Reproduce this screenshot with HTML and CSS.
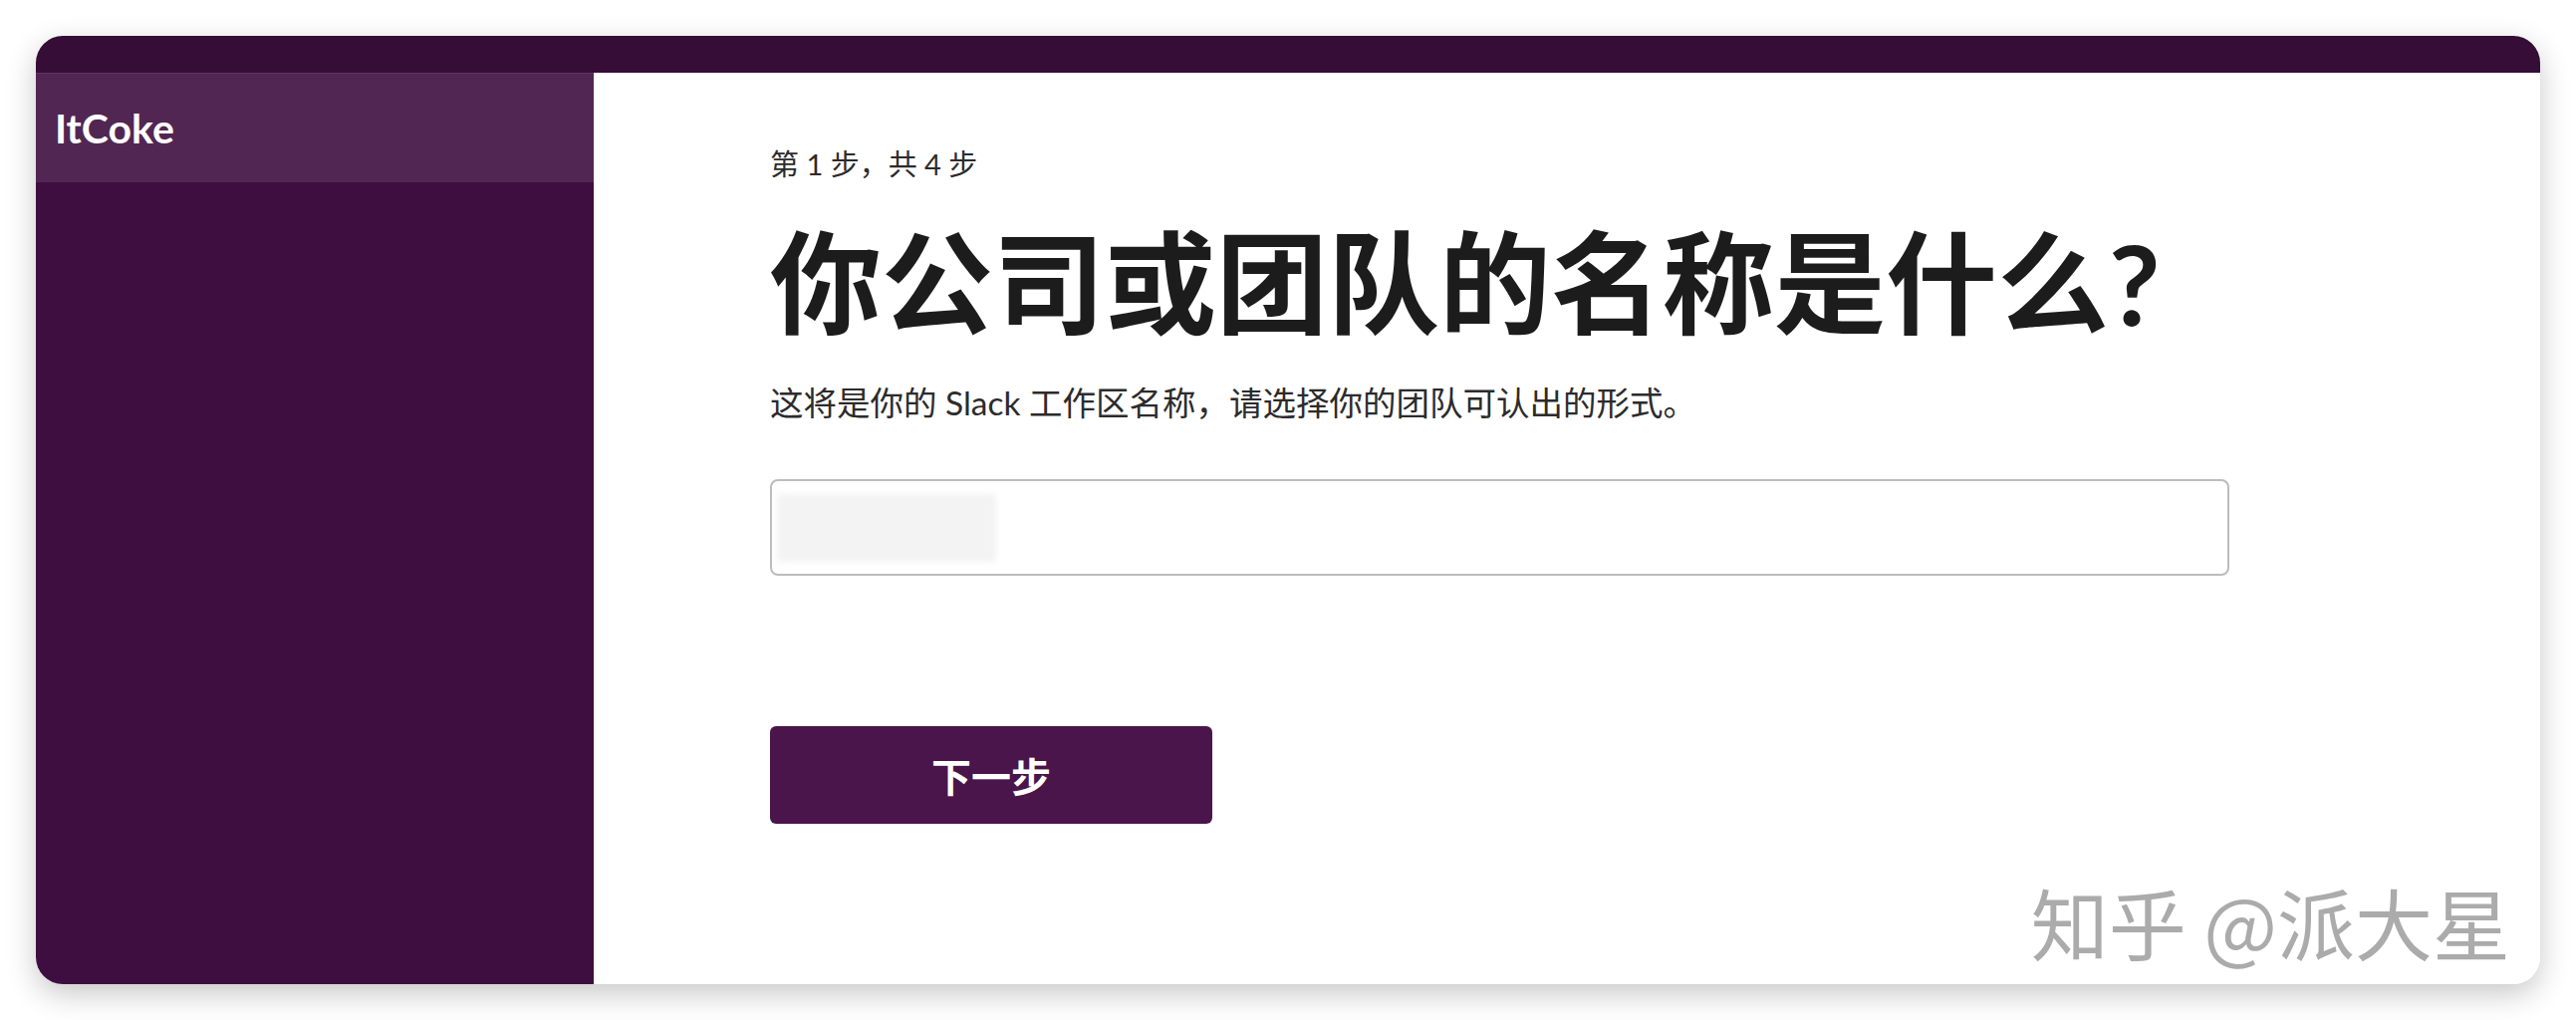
FILE: index.html
```html
<!DOCTYPE html>
<html lang="zh-CN">
	<head>
		<meta charset="UTF-8" />
		<meta name="viewport" content="width=device-width, initial-scale=1.0" />
		<title>创建工作区 | Slack</title>
		<link rel="stylesheet" href="styles.css">
	</head>
	<body>
		<div class="window">
			<div class="topbar"></div>
			<div class="frame">
				<aside class="sidebar">
					<div class="team-name">ItCoke</div>
				</aside>
				<main class="setup">
					<p class="step">第 1 步，共 4 步</p>
					<h1>你公司或团队的名称是什么?</h1>
					<p class="hint">这将是你的 Slack 工作区名称，请选择你的团队可认出的形式。</p>
					<div class="field">
						<span class="redacted"></span>
					</div>
					<button class="next">下一步</button>
				</main>
			</div>
			<div class="watermark">知乎 @派大星</div>
		</div>
	</body>
</html>
```

FILE: styles.css
```css
body {
	margin: 0;
	padding: 36px;
	background: #fff;
	font-family: Lato, "Noto Sans CJK SC", sans-serif;
	color: #1d1c1d;
}
.window {
	position: relative;
	display: flex;
	flex-direction: column;
	height: 952px;
	border-radius: 27px;
	overflow: hidden;
	box-shadow: 0 10px 30px rgba(0, 0, 0, 0.22);
}
.topbar {
	height: 37px;
	background: #350d36;
}
.frame {
	flex: 1;
	display: flex;
}
.sidebar {
	width: 560px;
	background: #3f0e40;
}
.team-name {
	height: 109px;
	border-top: 1px solid #5d365e;
	background: #522653;
	display: flex;
	align-items: center;
	padding-left: 19px;
	color: #fff;
	font-size: 41px;
	font-weight: 700;
}
.setup {
	flex: 1;
	background: #fff;
	padding: 74px 0 0 177px;
}
.step {
	margin: 0;
	font-size: 29px;
	line-height: 36px;
	color: #2c2b2c;
}
h1 {
	margin: 35px 0 0;
	font-size: 112px;
	line-height: 132px;
	font-weight: 700;
	color: #1d1c1d;
}
.hint {
	margin: 32px 0 0;
	font-size: 33.5px;
	line-height: 44px;
	color: #2c2b2c;
}
.field {
	box-sizing: border-box;
	margin-top: 55px;
	width: 1465px;
	height: 97px;
	border: 2px solid #bcbcbc;
	border-radius: 8px;
	display: flex;
	align-items: center;
	padding-left: 5px;
}
.redacted {
	width: 220px;
	height: 68px;
	background: #f3f3f3;
	filter: blur(3px);
}
.next {
	display: block;
	margin-top: 151px;
	width: 444px;
	height: 98px;
	border: none;
	border-radius: 6px;
	background: #4a154b;
	color: #fff;
	font-family: "Noto Sans CJK SC", Lato, sans-serif;
	font-size: 40px;
	font-weight: 700;
	cursor: pointer;
}
.watermark {
	position: absolute;
	right: 30px;
	bottom: 24px;
	font-family: "Noto Sans CJK SC", sans-serif;
	font-size: 78px;
	line-height: 78px;
	color: #ababab;
	text-shadow: 2px 2px 0 #fff;
}
```
